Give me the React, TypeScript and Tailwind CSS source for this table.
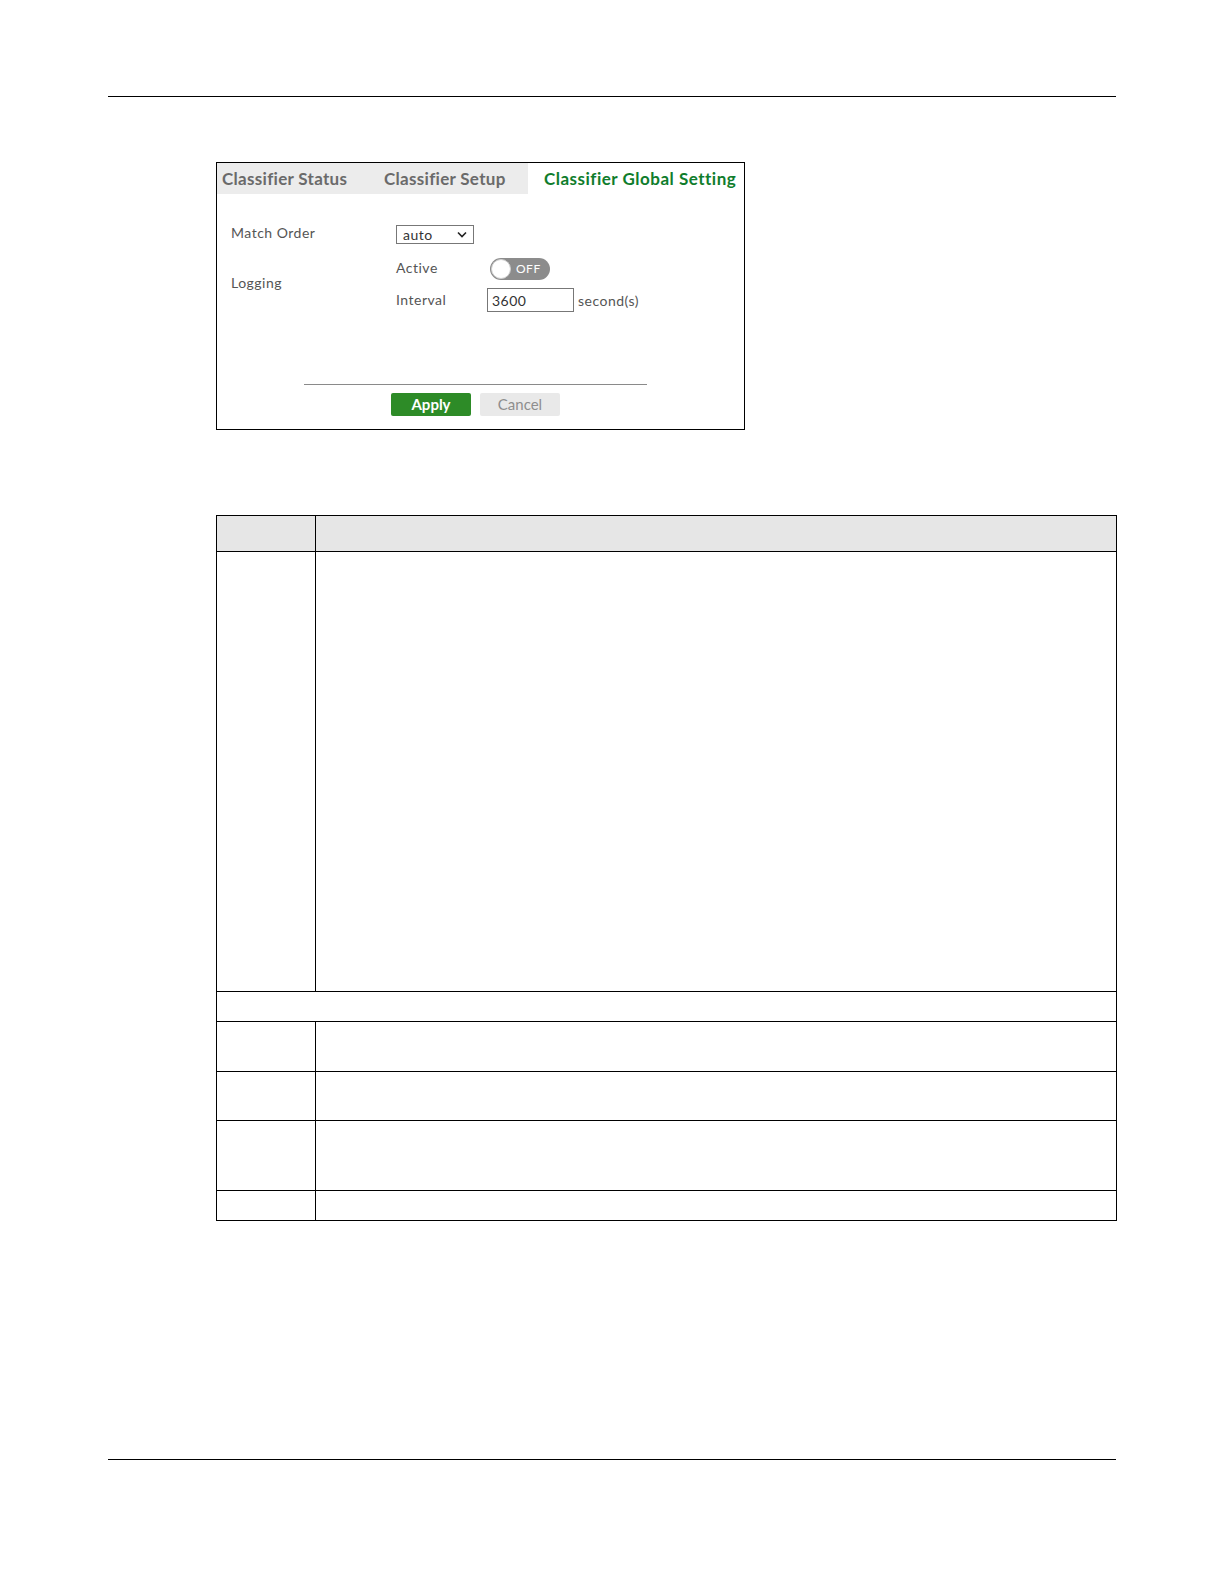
const font = "font-['Lato','Liberation_Sans',sans-serif]"

function Toggle() {
  return (
    <div className="relative flex h-[22px] w-[60px] items-center rounded-full bg-[#8c8c8c]">
      <div className="absolute left-[1px] top-[1px] h-[20px] w-[20px] rounded-full border border-[#cfcfcf] bg-white" />
      <span className="ml-[26px] text-[12px] leading-none text-white">OFF</span>
    </div>
  )
}

function Panel() {
  return (
    <div className={`ml-[216px] mt-[65px] h-[268px] w-[529px] border border-black ${font}`}>
      {/* tabs */}
      <div className="flex h-[31px] items-center">
        <div className="flex h-full w-[311px] items-center bg-[#ececec] text-[17px] font-bold tracking-[0.3px] text-[#6a6a6a]">
          <span className="ml-[5px] w-[162px]">Classifier Status</span>
          <span>Classifier Setup</span>
        </div>
        <span className="ml-[16px] text-[17px] font-bold tracking-[0.5px] text-[#0f7d2c]">Classifier Global Setting</span>
      </div>

      <div className="pl-[14px] text-[14px] tracking-[0.5px] text-[#555]">
        <div className="mt-[30px] flex h-[20px] items-center">
          <span className="w-[165px] -translate-y-[2px]">Match Order</span>
          <div className="flex h-[19px] w-[78px] items-center justify-between border border-[#777] px-[6px] text-[14px] text-[#333]">
            <span>auto</span>
            <svg width="10" height="7" viewBox="0 0 10 7">
              <path d="M1 1.5 L5 5.5 L9 1.5" fill="none" stroke="#222" strokeWidth="1.6" />
            </svg>
          </div>
        </div>

        <div className="mt-[14px] flex items-center">
          <span className="w-[165px] -translate-y-[3px]">Logging</span>
          <div className="flex flex-col gap-[8px]">
            <div className="flex h-[22px] items-center">
              <span className="w-[94px] -translate-y-[2px]">Active</span>
              <Toggle />
            </div>
            <div className="flex h-[24px] items-center">
              <span className="w-[91px] -translate-y-[1px]">Interval</span>
              <div className="flex h-[24px] w-[87px] items-center border border-[#777] px-[4px] text-[#333]">3600</div>
              <span className="ml-[4px]">second(s)</span>
            </div>
          </div>
        </div>
      </div>

      <div className="ml-[87px] mt-[72px] h-px w-[343px] bg-[#8a8a8a]" />

      <div className="ml-[174px] mt-[8px] flex gap-[9px]">
        <div className="flex h-[23px] w-[80px] items-center justify-center rounded-[2px] bg-[#2d8b27] text-[15px] font-bold text-white">
          Apply
        </div>
        <div className="flex h-[23px] w-[80px] items-center justify-center rounded-[2px] bg-[#e9e9e9] text-[15px] text-[#8e8e8e]">
          Cancel
        </div>
      </div>
    </div>
  )
}

function Table() {
  const rows = [440, 0, 50, 49, 70, 30]
  return (
    <table className="ml-[216px] mt-[85px] w-[901px] border-collapse">
      <tbody>
        <tr className="h-[36px] bg-[#e6e6e6]">
          <td className="w-[99px] border border-black" />
          <td className="border border-black" />
        </tr>
        {rows.map((h, i) =>
          h === 0 ? (
            <tr key={i} className="h-[30px]">
              <td colSpan={2} className="border border-black" />
            </tr>
          ) : (
            <tr key={i} style={{ height: h }}>
              <td className="border border-black" />
              <td className="border border-black" />
            </tr>
          ),
        )}
      </tbody>
    </table>
  )
}

export default function App() {
  return (
    <div className="flex h-[1584px] w-[1224px] flex-col bg-white pt-[96px]">
      <div className="ml-[108px] h-px w-[1008px] bg-black" />
      <Panel />
      <Table />
      <div className="ml-[108px] mt-[238px] h-px w-[1008px] bg-black" />
    </div>
  )
}
